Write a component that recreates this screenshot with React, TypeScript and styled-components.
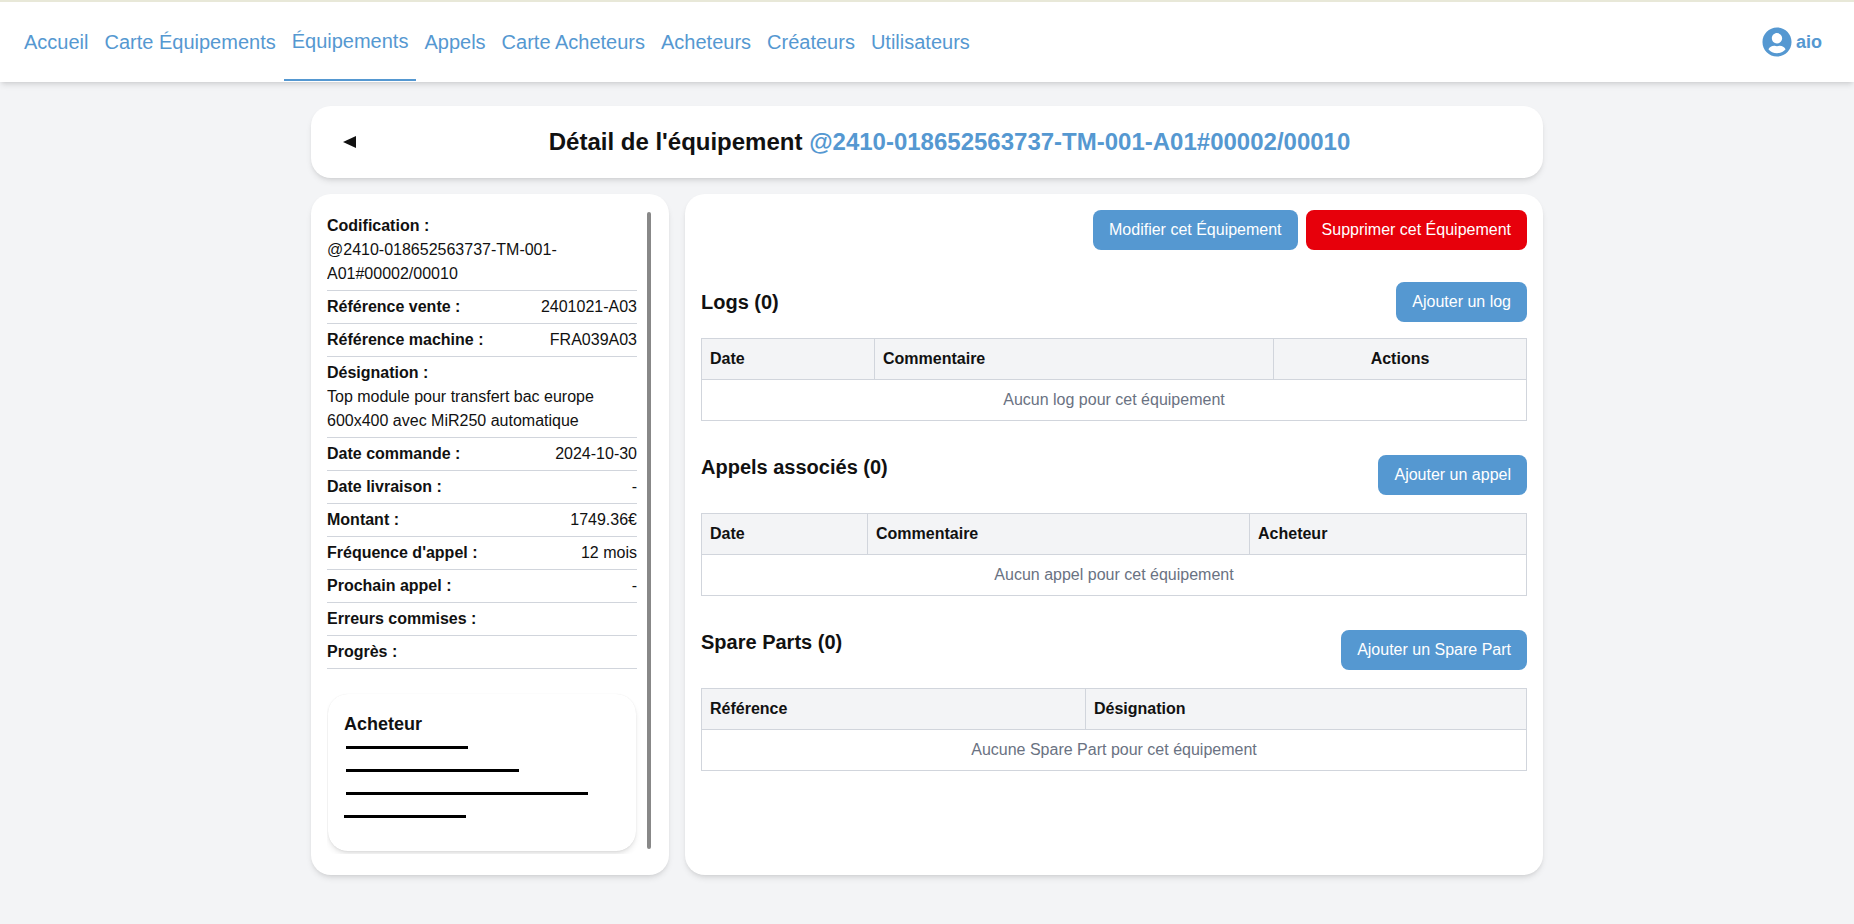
import React from "react";
import styled, { createGlobalStyle } from "styled-components";
import { FaUserCircle } from "react-icons/fa";

const blue = "#5598d1";
const line = "#d1d5dc";
const softShadow = "0 4px 6px -1px rgba(0, 0, 0, 0.1), 0 2px 4px -2px rgba(0, 0, 0, 0.1)";

const GlobalStyle = createGlobalStyle`
  * { box-sizing: border-box; }
  html, body { margin: 0; padding: 0; }
  body {
    background: #f3f4f6;
    color: #111;
    font-family: "Liberation Sans", Arial, sans-serif;
    font-size: 16px;
    line-height: 24px;
    min-height: 924px;
  }
`;

const Navbar = styled.nav`
  display: flex;
  align-items: stretch;
  justify-content: space-between;
  height: 82px;
  padding: 0 16px;
  background: #fff;
  border-top: 2px solid #e8e8d8;
  box-shadow: ${softShadow};
`;

const Links = styled.div`
  display: flex;
  align-items: stretch;
`;

const NavLink = styled.a<{ $active?: boolean }>`
  display: flex;
  align-items: center;
  padding: 0 8px;
  color: ${blue};
  font-size: 20px;
  border-bottom: ${(p) => (p.$active ? `2px solid ${blue}` : "0")};
  margin-bottom: ${(p) => (p.$active ? "1px" : "0")};
`;

const UserBox = styled.div`
  display: flex;
  align-items: center;
  gap: 4px;
  padding-right: 16px;
  color: ${blue};
  font-size: 18px;
  font-weight: 700;
`;

const Page = styled.main`
  width: 1232px;
  margin: 24px auto 0;
`;

const HeaderCard = styled.header`
  display: flex;
  align-items: center;
  height: 72px;
  padding: 0 32px;
  margin-bottom: 16px;
  background: #fff;
  border-radius: 20px;
  box-shadow: ${softShadow};
`;

const BackArrow = styled.span`
  width: 0;
  height: 0;
  border-top: 6.5px solid transparent;
  border-bottom: 6.5px solid transparent;
  border-right: 13px solid #111;
`;

const Title = styled.h1`
  flex: 1;
  margin: 0;
  padding-left: 32px;
  text-align: center;
  font-size: 24px;
  line-height: 32px;
  font-weight: 700;
`;

const Code = styled.span`
  color: ${blue};
`;

const Columns = styled.div`
  display: flex;
  gap: 16px;
  height: 681px;
`;

const Card = styled.section`
  background: #fff;
  border-radius: 20px;
  box-shadow: ${softShadow};
`;

const InfoCard = styled(Card)`
  position: relative;
  width: 358px;
  padding: 16px 18px 21px 16px;
`;

const Scroller = styled.div`
  height: 100%;
  overflow: hidden;
  padding-right: 14px;
`;

const Thumb = styled.div`
  position: absolute;
  top: 18px;
  right: 18px;
  width: 4px;
  height: 637px;
  border-radius: 2px;
  background: #888;
`;

const Row = styled.div<{ $stacked?: boolean }>`
  display: ${(p) => (p.$stacked ? "block" : "flex")};
  justify-content: space-between;
  padding: 4px 0;
  border-bottom: 1px solid ${line};
`;

const Label = styled.strong`
  display: block;
  font-weight: 700;
`;

const Buyer = styled.div`
  height: 157px;
  margin: 25px 1px 0;
  padding: 17px 16px 16px;
  border-radius: 20px;
  box-shadow: ${softShadow}, 0 0 1px rgba(0, 0, 0, 0.1);
`;

const BuyerTitle = styled.h3`
  margin: 0 0 9px;
  font-size: 18px;
  line-height: 26px;
  font-weight: 700;
`;

const Redacted = styled.div<{ $width: number; $shift?: number }>`
  width: ${(p) => p.$width}px;
  height: 3px;
  margin: 0 0 20px ${(p) => p.$shift ?? 2}px;
  background: #000;
`;

const MainCard = styled(Card)`
  flex: 1;
  padding: 16px;
`;

const Actions = styled.div`
  display: flex;
  justify-content: flex-end;
  gap: 8px;
  margin-bottom: 32px;
`;

const Button = styled.button<{ $danger?: boolean }>`
  height: 40px;
  padding: 0 16px;
  border: 0;
  border-radius: 8px;
  background: ${(p) => (p.$danger ? "#e7000b" : blue)};
  color: #fff;
  font: inherit;
`;

const SectionHead = styled.div<{ $center?: boolean }>`
  display: flex;
  justify-content: space-between;
  align-items: ${(p) => (p.$center ? "center" : "flex-start")};
  margin-bottom: ${(p) => (p.$center ? "16px" : "18px")};
`;

const SectionTitle = styled.h2`
  margin: 0;
  font-size: 20px;
  line-height: 24px;
  font-weight: 700;
`;

const Table = styled.table`
  width: 100%;
  table-layout: fixed;
  border-collapse: collapse;
  margin-bottom: 34px;
`;

const Th = styled.th<{ $center?: boolean }>`
  padding: 8px;
  border: 1px solid ${line};
  background: #f3f4f6;
  font-weight: 700;
  text-align: ${(p) => (p.$center ? "center" : "left")};
`;

const EmptyCell = styled.td`
  padding: 8px;
  border: 1px solid ${line};
  color: #6a7282;
  text-align: center;
`;

const navItems = ["Accueil", "Carte Équipements", "Équipements", "Appels", "Carte Acheteurs", "Acheteurs", "Créateurs", "Utilisateurs"];

const infoRows = [
  ["Référence vente :", "2401021-A03"],
  ["Référence machine :", "FRA039A03"],
];

const moreRows = [
  ["Date commande :", "2024-10-30"],
  ["Date livraison :", "-"],
  ["Montant :", "1749.36€"],
  ["Fréquence d'appel :", "12 mois"],
  ["Prochain appel :", "-"],
  ["Erreurs commises :", ""],
  ["Progrès :", ""],
];

const App: React.FC = () => {
  return (
    <>
      <GlobalStyle />
      <Navbar>
        <Links>
          {navItems.map((item) => (
            <NavLink key={item} $active={item === "Équipements"}>
              {item}
            </NavLink>
          ))}
        </Links>
        <UserBox>
          <FaUserCircle size={30} />
          aio
        </UserBox>
      </Navbar>
      <Page>
        <HeaderCard>
          <BackArrow />
          <Title>
            Détail de l'équipement <Code>@2410-018652563737-TM-001-A01#00002/00010</Code>
          </Title>
        </HeaderCard>
        <Columns>
          <InfoCard>
            <Scroller>
              <Row $stacked>
                <Label>Codification :</Label>
                @2410-018652563737-TM-001-A01#00002/00010
              </Row>
              {infoRows.map(([label, value]) => (
                <Row key={label}>
                  <Label>{label}</Label>
                  {value}
                </Row>
              ))}
              <Row $stacked>
                <Label>Désignation :</Label>
                Top module pour transfert bac europe 600x400 avec MiR250 automatique
              </Row>
              {moreRows.map(([label, value]) => (
                <Row key={label}>
                  <Label>{label}</Label>
                  {value}
                </Row>
              ))}
              <Buyer>
                <BuyerTitle>Acheteur</BuyerTitle>
                <Redacted $width={122} />
                <Redacted $width={173} />
                <Redacted $width={242} />
                <Redacted $width={122} $shift={0} />
              </Buyer>
            </Scroller>
            <Thumb />
          </InfoCard>
          <MainCard>
            <Actions>
              <Button>Modifier cet Équipement</Button>
              <Button $danger>Supprimer cet Équipement</Button>
            </Actions>

            <SectionHead $center>
              <SectionTitle>Logs (0)</SectionTitle>
              <Button>Ajouter un log</Button>
            </SectionHead>
            <Table>
              <colgroup>
                <col style={{ width: 173 }} />
                <col style={{ width: 399 }} />
                <col />
              </colgroup>
              <thead>
                <tr>
                  <Th>Date</Th>
                  <Th>Commentaire</Th>
                  <Th $center>Actions</Th>
                </tr>
              </thead>
              <tbody>
                <tr>
                  <EmptyCell colSpan={3}>Aucun log pour cet équipement</EmptyCell>
                </tr>
              </tbody>
            </Table>

            <SectionHead>
              <SectionTitle>Appels associés (0)</SectionTitle>
              <Button>Ajouter un appel</Button>
            </SectionHead>
            <Table>
              <colgroup>
                <col style={{ width: 166 }} />
                <col style={{ width: 382 }} />
                <col />
              </colgroup>
              <thead>
                <tr>
                  <Th>Date</Th>
                  <Th>Commentaire</Th>
                  <Th>Acheteur</Th>
                </tr>
              </thead>
              <tbody>
                <tr>
                  <EmptyCell colSpan={3}>Aucun appel pour cet équipement</EmptyCell>
                </tr>
              </tbody>
            </Table>

            <SectionHead>
              <SectionTitle>Spare Parts (0)</SectionTitle>
              <Button>Ajouter un Spare Part</Button>
            </SectionHead>
            <Table>
              <colgroup>
                <col style={{ width: 384 }} />
                <col />
              </colgroup>
              <thead>
                <tr>
                  <Th>Référence</Th>
                  <Th>Désignation</Th>
                </tr>
              </thead>
              <tbody>
                <tr>
                  <EmptyCell colSpan={2}>Aucune Spare Part pour cet équipement</EmptyCell>
                </tr>
              </tbody>
            </Table>
          </MainCard>
        </Columns>
      </Page>
    </>
  );
};

export default App;
